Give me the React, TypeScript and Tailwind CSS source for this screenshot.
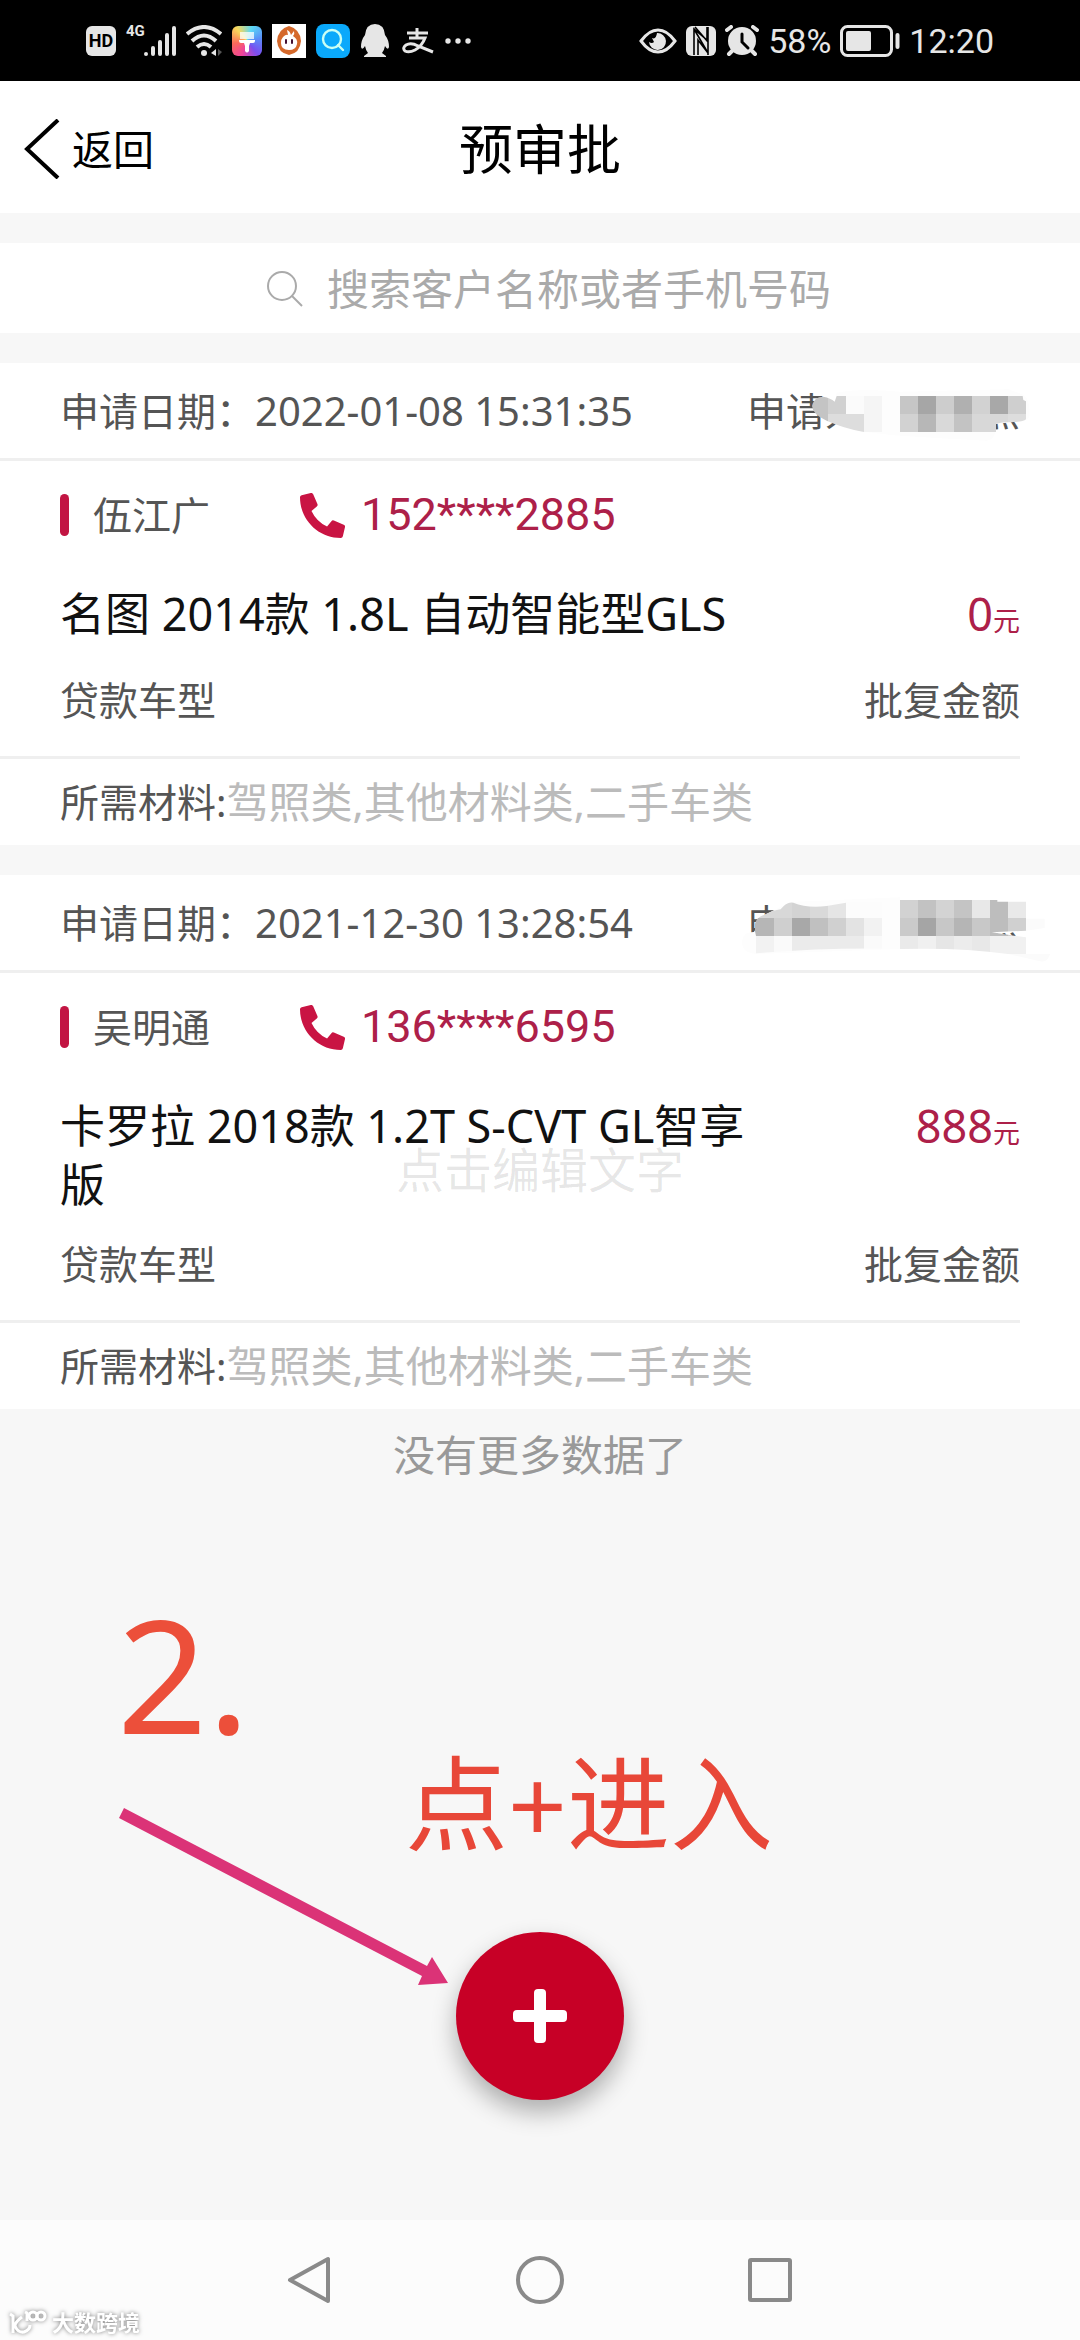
import type { ReactNode } from "react";
import { FaPhoneAlt } from "react-icons/fa";

type Cell = [x: number, y: number, w: number, h: number, fill: string];

const records = [
    {
        id: "a",
        date: "2022-01-08 15:31:35",
        name: "伍江广",
        phone: "152****2885",
        car: "名图 2014款 1.8L 自动智能型GLS",
        amount: "0",
        materials: "驾照类,其他材料类,二手车类",
        mask: <MaskOne />
    },
    {
        id: "b",
        date: "2021-12-30 13:28:54",
        name: "吴明通",
        phone: "136****6595",
        car: "卡罗拉 2018款 1.2T S-CVT GL智享版",
        amount: "888",
        materials: "驾照类,其他材料类,二手车类",
        mask: <MaskTwo />
    }
];

const maskOneCells: Cell[] = [
    [450, 108, 54, 108, "#c4c4c4"],
    [504, 108, 54, 54, "#d1d1d1"],
    [558, 108, 54, 54, "#fbfbfb"],
    [612, 108, 54, 108, "#f5f5f5"],
    [504, 162, 108, 54, "#dddddd"],
    [720, 108, 54, 54, "#c6c6c6"],
    [774, 108, 54, 54, "#a6a6a6"],
    [828, 108, 54, 54, "#cdcdcd"],
    [882, 108, 54, 54, "#b0b0b0"],
    [936, 108, 54, 54, "#d2d2d2"],
    [990, 108, 54, 54, "#a8a8a8"],
    [1044, 108, 54, 54, "#cfcfcf"],
    [720, 162, 54, 54, "#d2d2d2"],
    [774, 162, 54, 54, "#b7b7b7"],
    [828, 162, 54, 54, "#d9d9d9"],
    [882, 162, 54, 54, "#c3c3c3"],
    [936, 162, 108, 54, "#d8d8d8"],
    [1044, 162, 54, 54, "#dddddd"]
];

const maskTwoCells: Cell[] = [
    [270, 120, 126, 54, "#d8d8d8"],
    [396, 120, 54, 54, "#d3d3d3"],
    [450, 120, 54, 54, "#d9d9d9"],
    [504, 120, 54, 54, "#e5e5e5"],
    [558, 120, 108, 54, "#fcfcfc"],
    [270, 174, 72, 54, "#b6b6b6"],
    [342, 174, 54, 54, "#cfcfcf"],
    [396, 174, 54, 54, "#a8a8a8"],
    [450, 174, 54, 54, "#c0c0c0"],
    [504, 174, 54, 54, "#d0d0d0"],
    [558, 174, 54, 54, "#e3e3e3"],
    [612, 174, 54, 54, "#f2f2f2"],
    [270, 228, 72, 54, "#f2f2f2"],
    [342, 228, 54, 54, "#fafafa"],
    [396, 228, 216, 54, "#ebebeb"],
    [612, 228, 54, 54, "#fafafa"],
    [720, 120, 54, 54, "#d2d2d2"],
    [774, 120, 54, 54, "#c2c2c2"],
    [828, 120, 54, 54, "#d3d3d3"],
    [882, 120, 54, 54, "#c4c4c4"],
    [936, 120, 54, 54, "#e8e8e8"],
    [990, 120, 54, 108, "#bdbdbd"],
    [1044, 120, 54, 54, "#e9e9e9"],
    [720, 174, 54, 54, "#cacaca"],
    [774, 174, 54, 54, "#a5a5a5"],
    [828, 174, 54, 54, "#c7c7c7"],
    [882, 174, 54, 54, "#b5b5b5"],
    [936, 174, 54, 54, "#c8c8c8"],
    [1044, 174, 54, 54, "#d0d0d0"],
    [720, 228, 54, 54, "#eaeaea"],
    [774, 228, 54, 54, "#f0f0f0"],
    [828, 228, 54, 54, "#e6e6e6"],
    [882, 228, 54, 54, "#ececec"],
    [936, 228, 54, 54, "#e8e8e8"],
    [990, 228, 108, 54, "#f1f1f1"]
];

function Cells({ cells }: { cells: Cell[] }) {
    return (
        <>
            {cells.map(([x, y, w, h, fill]) => (
                <rect key={`${x}-${y}`} x={x} y={y} width={w} height={h} fill={fill} shapeRendering="crispEdges" />
            ))}
        </>
    );
}

function MaskOne() {
    return (
        <svg viewBox="240 9 1020 285" className="absolute right-0 top-0 h-[95px] w-[340px]" aria-hidden="true">
            <clipPath id="mask-one">
                <path d="M456 138Q462 110 490 110Q512 114 524 125L530 108H666V216H612Q548 204 500 182Q458 164 456 138Z" />
                <path d="M720 108H1088L1090 120L1098 124V178Q1090 186 1060 186Q1020 186 1008 192V216H720Z" />
            </clipPath>
            <path d="M524 126L530 98Q600 84 720 95L1045 88L1090 104Q1112 120 1108 170Q1100 186 1060 186L1008 192Q1008 240 980 242Q840 236 700 226L600 214Z" fill="#fdfdfd" />
            <g clipPath="url(#mask-one)"><Cells cells={maskOneCells} /></g>
        </svg>
    );
}

function MaskTwo() {
    return (
        <svg viewBox="240 45 1020 285" className="absolute right-0 top-0 h-[95px] w-[340px]" aria-hidden="true">
            <clipPath id="mask-two">
                <path d="M288 228Q276 184 300 170L340 152L362 148Q380 124 400 128Q440 145 500 138L558 128H666V266Q480 264 288 280Z" />
                <path d="M720 120H1012V125H1098V212L995 217L1098 232V282H1044Q900 262 720 267Z" />
            </clipPath>
            <path d="M246 250Q246 215 283 216L300 172L390 126L720 112V267L288 282Q250 280 246 250Z" fill="#fdfdfd" />
            <path d="M1098 176H1154V204L1098 212ZM1098 282H1170Q1164 308 1140 304L1044 282Z" fill="#fbfbfb" />
            <g clipPath="url(#mask-two)"><Cells cells={maskTwoCells} /></g>
        </svg>
    );
}

function StatusBar() {
    return (
        <div className="flex h-[81px] items-center justify-between bg-black px-[86px] text-[#e6e6e6]">
            <div className="flex items-center gap-[10px]">
                <div className="flex size-[30px] items-center justify-center rounded-[6px] bg-[#e6e6e6] font-['Roboto',sans-serif] text-[18px] font-bold text-black">HD</div>

                {/* Mobile signal */}
                <div className="relative">
                    <span className="absolute left-0 -top-1 font-['Roboto',sans-serif] text-[15px] leading-5 font-bold">4G</span>
                    <svg viewBox="0 0 50 32" className="h-8 w-[50px]" stroke="currentColor" strokeWidth="4" strokeLinecap="round">
                        <path d="M20 29v-.1M27 29v-6M34 29V17M41 29V10M48 29V3" />
                    </svg>
                </div>

                <svg viewBox="0 0 36 32" className="h-8 w-9" fill="none" stroke="currentColor" strokeWidth="4">
                    <path d="M1 9Q18-5 35 9M6 16Q18 5 30 16M11 22Q18 16 25 22" />
                    <circle cx="18" cy="28" r="3" fill="currentColor" stroke="none" />
                    <path d="M25 28l5-4v7z" fill="currentColor" stroke="none" />
                    <path d="M32 24v7l4-4z" fill="#555" stroke="none" />
                </svg>

                <div className="flex size-[30px] items-center justify-center rounded-[6px] bg-[conic-gradient(from_20deg,#5bd8f5,#5a8cf8,#7a4ff0,#f0439a,#fb6a5a,#f9d85a,#5bd8f5)]">
                    <svg viewBox="0 0 30 30" className="size-[30px]" fill="#fff">
                        <path d="M8 6h14v7H8z" opacity=".75" />
                        <path d="M7 14h16v1q0 2-2 2h-3l-1 3v5q-2 3-4 0v-5l-1-3H9q-2 0-2-2z" />
                    </svg>
                </div>

                <svg viewBox="0 0 34 34" className="size-[34px]">
                    <path d="M0 0h34v34H0z" fill="#fff" />
                    <path d="M17 2Q6 5 5 17q1 12 12 14 11-2 12-14Q28 5 17 2z" fill="#d5692b" />
                    <path d="M11 13q3-3 5-2l-1-5q3 1 4 5l3-4q1 3-1 5 5 3 4 8-1 6-8 6-8 0-8-7 0-4 2-6z" fill="#fff" />
                    <path d="M14 16v3M20 16v3" stroke="#413" strokeWidth="2" strokeLinecap="round" />
                </svg>

                <svg viewBox="0 0 34 34" className="size-[34px]" fill="none" stroke="#c9fff4" strokeWidth="2.4">
                    <rect width="34" height="34" rx="8" fill="#0aa9fb" stroke="none" />
                    <circle cx="16" cy="15" r="9" />
                    <path d="M22 21l5 5" strokeLinecap="round" />
                </svg>

                <svg viewBox="0 0 30 33" className="h-[33px] w-[30px]" fill="currentColor">
                    <path d="M15 0q9 0 10 11 4 5 4 12-1 4-4-1-1 5-3 7l4 3v1H4v-1l4-3q-2-2-3-7-3 5-4 1 0-7 4-12Q6 0 15 0z" />
                </svg>

                {/* Payment */}
                <svg viewBox="-2 0 34 26" className="h-[26px] w-[34px]" fill="none" stroke="currentColor" strokeWidth="3">
                    <path d="M5 5h21M15 0v10M7 10h16q-3 8-10 12-6 3-10 1-3-3 1-6 5-3 12 1l15 6" />
                </svg>

                <svg viewBox="0 0 28 8" className="h-2 w-7" fill="currentColor">
                    <circle cx="4" cy="4" r="2.7" />
                    <circle cx="14" cy="4" r="2.7" />
                    <circle cx="24" cy="4" r="2.7" />
                </svg>
            </div>

            <div className="flex items-center gap-[9px] font-['Roboto',sans-serif] text-[34px] leading-10">
                <svg viewBox="0 0 38 26" className="h-[26px] w-[38px]" fill="none" stroke="currentColor" strokeWidth="3">
                    <path d="M2 13Q10 2 19 2t17 11Q28 24 19 24T2 13z" />
                    <path d="M18 5a8.500 8.500 0 1 1-8 9q3 2 5 0l-2-4q4 2 5-5z" fill="currentColor" stroke="none" />
                </svg>

                {/* NFC */}
                <svg viewBox="0 0 30 30" className="size-[30px]">
                    <rect width="30" height="30" rx="6" fill="currentColor" />
                    <path d="M8 29V3l13 11V1M8 3l14 24M9 1l13 15M22 1v28M12 29V14l10 13" fill="none" stroke="#000" strokeWidth="1.600" />
                </svg>

                <svg viewBox="0 0 34 32" className="h-8 w-[34px]" fill="none" stroke="currentColor" strokeWidth="4" strokeLinecap="round">
                    <circle cx="17" cy="16" r="14" fill="currentColor" stroke="none" />
                    <path d="M2 5l4-3M32 5l-4-3M7 26l-3 3M27 26l3 3" />
                    <path d="M17 9v8l6 6" stroke="#000" strokeWidth="3" />
                </svg>

                <span>58%</span>

                <svg viewBox="0 0 60 32" className="h-8 w-[60px]">
                    <rect x="1.500" y="1.500" width="50" height="29" rx="6" fill="none" stroke="currentColor" strokeWidth="3" />
                    <rect x="6" y="6" width="25" height="20" rx="2" fill="currentColor" />
                    <path d="M57.500 10v12" stroke="currentColor" strokeWidth="4" strokeLinecap="round" />
                </svg>

                <span>12:20</span>
            </div>
        </div>
    );
}

function RecordCard({ record }: { record: (typeof records)[number] }) {
    return (
        <article className="bg-white text-[39px] leading-[52px] text-[#555]">
            <div className="relative flex h-[98px] items-center justify-between border-b-[3px] border-[#efefef] px-[60px]">
                <p>
                    申请日期：<span className="text-[40px]">{record.date}</span>
                </p>
                <p className="flex w-[273px] justify-between">
                    <span>申请人：</span>
                    <span>点</span>
                </p>
                {record.mask}
            </div>

            <div className="flex h-[108px] items-center px-[60px]">
                <span className="h-[42px] w-[9px] rounded-full bg-[#c21543]" />
                <span className="ml-6 w-[207px]">{record.name}</span>
                <a href={`tel:${record.phone}`} className="flex items-center gap-4 font-['Roboto',sans-serif] text-[45px] text-[#ad2049]">
                    <FaPhoneAlt className="size-[45px] text-[#c91443]" />
                    {record.phone}
                </a>
            </div>

            <div className="flex min-h-[80px] items-start justify-between px-[60px] pt-[15px] text-[45px] leading-[59px]">
                <h2 className="w-[720px] text-[#111]">{record.car}</h2>
                <p className="text-[#ad2049]">
                    {record.amount}
                    <span className="text-[27px]">元</span>
                </p>
            </div>

            <div className="mr-[60px] flex justify-between border-b-[3px] border-[#efefef] pt-6 pb-[30px] pl-[60px]">
                <span>贷款车型</span>
                <span>批复金额</span>
            </div>

            <p className="flex h-[86px] items-center px-[60px]">
                所需材料:
                <span className="text-[42px] text-[#bbb]">{record.materials}</span>
            </p>
        </article>
    );
}

function NavButton({ label, children }: { label: string; children: ReactNode }) {
    return (
        <button type="button" aria-label={label} className="size-12">
            <svg viewBox="0 0 48 48" className="size-12" fill="none" stroke="#8a8a8a" strokeWidth="4" strokeLinejoin="round">
                {children}
            </svg>
        </button>
    );
}

export default function App() {
    return (
        <div className="relative flex min-h-screen flex-col bg-[#f7f7f7] font-['Noto_Sans','Noto_Sans_CJK_SC',sans-serif]">
            <StatusBar />

            <header className="grid h-[132px] grid-cols-3 items-center bg-white px-6 pt-1 text-black">
                <button type="button" className="flex items-center gap-3 text-[41px] leading-[60px]">
                    <svg viewBox="0 0 36 60" className="h-[60px] w-9" fill="none" stroke="currentColor" strokeWidth="4">
                        <path d="M34 1L3 30l31 29" />
                    </svg>
                    返回
                </button>
                <h1 className="text-center text-[54px] leading-[60px]">预审批</h1>
            </header>

            <label className="my-[30px] flex h-[90px] items-center justify-center gap-6 bg-white pt-[2px] pl-6">
                <svg viewBox="0 0 36 36" className="size-9" fill="none" stroke="#aaa" strokeWidth="2" aria-hidden="true">
                    <circle cx="15" cy="15" r="14" />
                    <path d="M25 25l10 10" />
                </svg>
                <input
                    type="text"
                    aria-label="搜索"
                    placeholder="搜索客户名称或者手机号码"
                    className="w-[510px] bg-transparent text-[42px] leading-[60px] outline-none placeholder:text-[#aaa]"
                />
            </label>

            <main className="flex flex-1 flex-col">
                <div className="flex flex-col gap-[30px]">
                    {records.map((record) => (
                        <RecordCard key={record.id} record={record} />
                    ))}
                </div>
                <p className="py-4 text-center text-[42px] leading-[60px] text-[#999]">没有更多数据了</p>

                <div className="relative flex flex-1 flex-col items-center justify-end pb-[120px]">
                    {/* Step notes drawn over the empty area */}
                    <span className="absolute left-[117px] top-[92px] text-[158px] leading-[160px] text-[#ec4f3a]">2.</span>
                    <span className="absolute left-[405px] top-[242px] text-[103px] leading-[120px] text-[#e84738]">点+进入</span>
                    <svg viewBox="0 0 332 182" className="absolute left-[118px] top-[306px] h-[182px] w-[332px]" fill="#db3377" aria-hidden="true">
                        <path d="M6 1L309 159L314 150L330 176L300 178L304 169L1 11Z" />
                    </svg>

                    <button
                        type="button"
                        aria-label="新增"
                        className="flex size-[168px] items-center justify-center rounded-full bg-[#c70026] shadow-[0_12px_24px_rgba(0,0,0,0.3)]"
                    >
                        <svg viewBox="0 0 54 54" className="size-[54px]" fill="#fff">
                            <rect x="21" width="12" height="54" rx="4" />
                            <rect y="21" width="54" height="12" rx="4" />
                        </svg>
                    </button>
                </div>
            </main>

            <nav className="flex h-[120px] items-center justify-center gap-[182px] bg-[#fcfcfc]">
                <NavButton label="返回上一页">
                    <path d="M42 3v42L4 24z" />
                </NavButton>
                <NavButton label="主页">
                    <circle cx="24" cy="24" r="22" />
                </NavButton>
                <NavButton label="最近任务">
                    <rect x="4" y="4" width="40" height="40" rx="1" />
                </NavButton>
            </nav>

            {/* Editor watermark */}
            <span className="pointer-events-none absolute inset-0 flex items-center justify-center text-[48px] text-black/10">点击编辑文字</span>

            <div className="absolute bottom-1 left-2 flex items-center gap-1 text-white drop-shadow-[0_0_2px_rgba(0,0,0,0.5)]">
                <svg viewBox="0 0 40 28" className="h-7 w-10" fill="none" stroke="currentColor" strokeWidth="3" aria-hidden="true">
                    <path d="M2 6l3 2v17M14 9q-7 5-7 9 3 7 9 6 6-2 6-7M17 4l2 1v8" />
                    <circle cx="25" cy="8" r="4" />
                    <circle cx="33" cy="8" r="4" />
                </svg>
                <span className="text-[22px] leading-7 font-bold">大数跨境</span>
            </div>
        </div>
    );
}
